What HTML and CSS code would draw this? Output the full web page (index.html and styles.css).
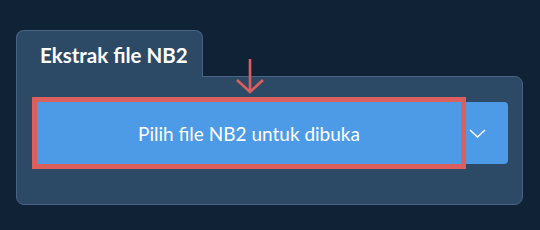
FILE: index.html
```html
<!DOCTYPE html>
<html>
<head>
<meta charset="utf-8">
<link rel="stylesheet" href="styles.css">
</head>
<body>
<div class="card">
  <div class="tab">Ekstrak file NB2</div>
  <div class="panel">
    <div class="btn-group">
      <button class="btn-main">Pilih file NB2 untuk dibuka</button>
      <button class="btn-drop">
        <svg width="17" height="9" viewBox="0 0 17 9"><path d="M1 1 L8.5 8 L16 1" fill="none" stroke="#fff" stroke-width="1.4"/></svg>
      </button>
    </div>
  </div>
  <svg class="arrow" width="30" height="38" viewBox="0 0 30 38"><path d="M15 2 V35 M2 23 L15 35 L28 23" fill="none" stroke="#db5f5c" stroke-width="2.6"/></svg>
</div>
</body>
</html>
```
FILE: styles.css
```css
html, body { margin: 0; padding: 0; }
body {
  background: #0f2236;
  width: 540px;
  height: 230px;
  padding: 30px 16px 0;
  box-sizing: border-box;
  font-family: Lato, "Noto Sans", sans-serif;
}
.card {
  position: relative;
  width: 507px;
}
.tab {
  position: relative;
  z-index: 1;
  display: inline-block;
  box-sizing: border-box;
  width: 187px;
  height: 47px;
  margin-bottom: -1px;
  padding: 12px 0 0 23px;
  background: #2c4966;
  border: 1px solid #4a6383;
  border-bottom: none;
  border-radius: 8px 8px 0 0;
  color: #fff;
  font-weight: 700;
  font-size: 20.5px;
  line-height: 25px;
  vertical-align: top;
}
.panel {
  box-sizing: border-box;
  height: 129px;
  background: #2c4966;
  border: 1px solid #4a6383;
  border-radius: 0 8px 8px 8px;
  padding: 25px 14px 0 20px;
}
.btn-group {
  display: flex;
  height: 62px;
}
.btn-main {
  position: relative;
  z-index: 1;
  width: 424px;
  border: none;
  background: #4d9be6;
  color: #fff;
  font-family: Lato, "Noto Sans", sans-serif;
  font-size: 19px;
  font-weight: 400;
  outline: 5px solid #db5f5c;
  padding: 0;
}
.btn-drop {
  flex: 1;
  border: none;
  background: #4d9be6;
  border-radius: 0 4px 4px 0;
  display: flex;
  align-items: center;
  padding: 0 0 0 8px;
}
.arrow {
  position: absolute;
  left: 219px;
  top: 27px;
}
```
